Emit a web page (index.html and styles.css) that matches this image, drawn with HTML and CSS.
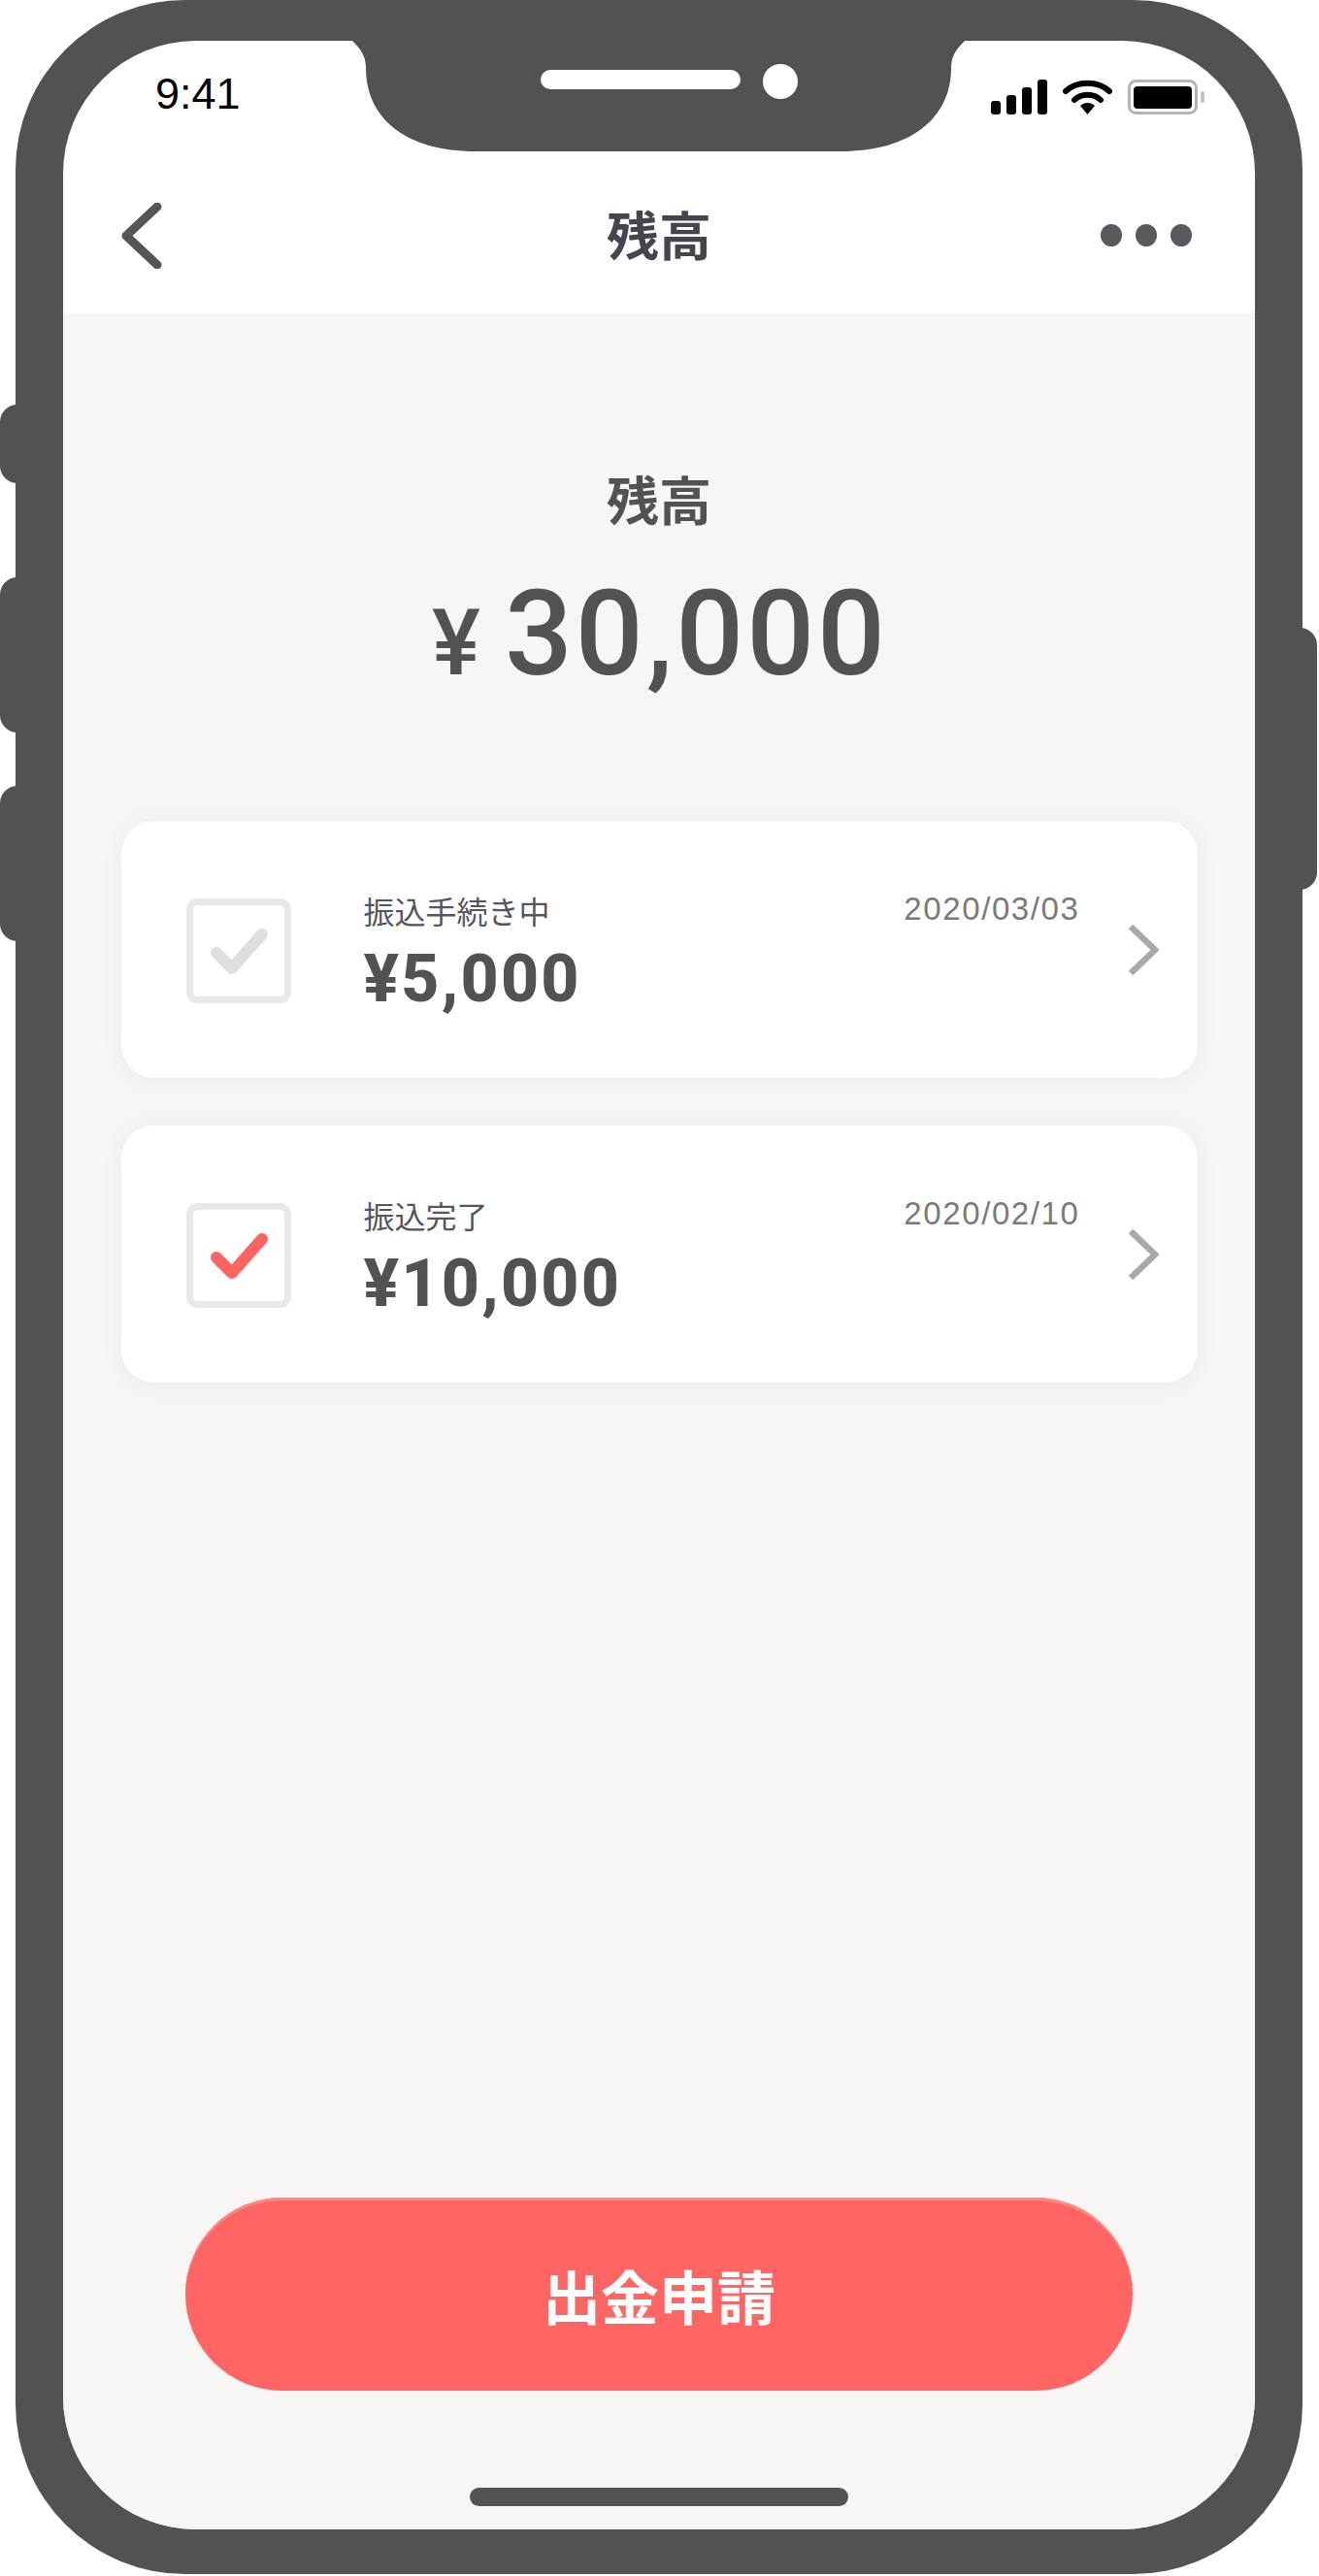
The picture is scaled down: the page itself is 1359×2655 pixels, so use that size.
FILE: index.html
```html
<!DOCTYPE html>
<html lang="ja">

<head>
    <meta charset="UTF-8">
    <title>残高</title>
    <link rel="stylesheet" href="styles.css">
</head>

<body>
    <div class="device">
        <span class="side-btn mute"></span>
        <span class="side-btn vol-up"></span>
        <span class="side-btn vol-down"></span>
        <span class="side-btn power"></span>

        <svg class="notch" width="631" height="114" viewBox="0 0 631 114">
            <path d="M0 0C8 8 14 15 14 28C14 80 55 114 127 114H503C575 114 617 80 617 28C617 15 623 8 631 0Z" fill="#525250" />
            <rect x="194" y="30" width="206" height="20" rx="10" fill="#fff" />
            <circle cx="441" cy="42" r="18" fill="#fff" />
        </svg>

        <div class="screen">
            <div class="status-bar">
                <span class="time">9:41</span>
                <div class="status-icons">
                    <svg width="58" height="36" viewBox="0 0 58 36">
                        <rect x="0" y="22" width="10" height="14" rx="3" />
                        <rect x="16" y="16" width="10" height="20" rx="3" />
                        <rect x="32" y="8" width="10" height="28" rx="3" />
                        <rect x="48" y="0" width="10" height="36" rx="3" />
                    </svg>
                    <svg width="51" height="36" viewBox="0 0 51 36">
                        <path d="M3 12C15 1 36 1 48 12" fill="none" stroke="#000" stroke-width="6" stroke-linecap="round" />
                        <path d="M12 21C19 14 32 14 39 21" fill="none" stroke="#000" stroke-width="6" stroke-linecap="round" />
                        <path d="M18 27C22 23 29 23 33 27L25.5 36Z" />
                    </svg>
                    <svg width="80" height="36" viewBox="0 0 80 36">
                        <rect x="1.5" y="1.5" width="69" height="33" rx="7" fill="none" stroke="#b5b5b5" stroke-width="3" />
                        <rect x="6" y="7" width="60" height="23" rx="4" />
                        <rect x="75" y="12" width="4" height="12" rx="2" fill="#c4c4c4" />
                    </svg>
                </div>
            </div>

            <header class="nav">
                <svg class="nav-back" width="42" height="68" viewBox="0 0 42 68">
                    <path d="M37 4L5 34L37 64" fill="none" stroke="#555" stroke-width="9" stroke-linecap="round" stroke-linejoin="round" />
                </svg>
                <h1 class="nav-title">残高</h1>
                <div class="nav-more"><i></i><i></i><i></i></div>
            </header>

            <main class="content">
                <section class="balance">
                    <p class="balance-label">残高</p>
                    <p class="balance-amount"><span class="yen">¥</span><span>30,000</span></p>
                </section>

                <section class="cards">
                    <article class="card">
                        <svg class="check" width="108" height="108" viewBox="0 0 108 108">
                            <rect x="3.5" y="3.5" width="101" height="101" rx="8" fill="none" stroke="#e8e8e8" stroke-width="7" />
                            <path d="M31 56L47 72L78 37" fill="none" stroke="#dedede" stroke-width="12" stroke-linecap="round" stroke-linejoin="round" />
                        </svg>
                        <div class="card-body">
                            <div class="card-top">
                                <span class="card-label">振込手続き中</span>
                                <span class="card-date">2020/03/03</span>
                            </div>
                            <p class="card-value">¥5,000</p>
                        </div>
                        <svg class="card-arrow" width="32" height="52" viewBox="0 0 32 52">
                            <path d="M3 2L28 26L3 50" fill="none" stroke="#a9a9a9" stroke-width="6.5" />
                        </svg>
                    </article>

                    <article class="card">
                        <svg class="check" width="108" height="108" viewBox="0 0 108 108">
                            <rect x="3.5" y="3.5" width="101" height="101" rx="8" fill="none" stroke="#e8e8e8" stroke-width="7" />
                            <path d="M31 56L47 72L78 37" fill="none" stroke="#ff6461" stroke-width="12" stroke-linecap="round" stroke-linejoin="round" />
                        </svg>
                        <div class="card-body">
                            <div class="card-top">
                                <span class="card-label">振込完了</span>
                                <span class="card-date">2020/02/10</span>
                            </div>
                            <p class="card-value">¥10,000</p>
                        </div>
                        <svg class="card-arrow" width="32" height="52" viewBox="0 0 32 52">
                            <path d="M3 2L28 26L3 50" fill="none" stroke="#a9a9a9" stroke-width="6.5" />
                        </svg>
                    </article>
                </section>

                <button class="withdraw">出金申請</button>
                <div class="home-bar"></div>
            </main>
        </div>
    </div>
</body>

</html>
```

FILE: styles.css
```css
* {
    margin: 0;
    padding: 0;
    box-sizing: border-box;
}
body {
    width: 1359px;
    height: 2655px;
    overflow: hidden;
    background: #fff;
    font-family: "Roboto", "Noto Sans CJK JP", sans-serif;
}
.device {
    position: relative;
    width: 1326px;
    height: 2653px;
    margin-left: 16px;
    padding: 42px 49px 46px;
    background: #525250;
    border-radius: 175px;
}
.side-btn {
    position: absolute;
    width: 40px;
    background: #525250;
    border-radius: 18px;
}
.mute {
    left: -16px;
    top: 417px;
    height: 81px;
}
.vol-up {
    left: -16px;
    top: 595px;
    height: 160px;
}
.vol-down {
    left: -16px;
    top: 810px;
    height: 160px;
}
.power {
    right: -15px;
    top: 647px;
    height: 270px;
}
.notch {
    position: absolute;
    left: 347px;
    top: 42px;
    z-index: 2;
}
.screen {
    display: flex;
    flex-direction: column;
    height: 100%;
    background: #fff;
    border-radius: 137px;
    overflow: hidden;
}

/* status bar */
.status-bar {
    display: flex;
    justify-content: space-between;
    height: 120px;
    padding: 40px 51px 0 95px;
}
.time {
    font-family: "Liberation Sans", sans-serif;
    font-size: 45px;
    line-height: 30px;
    color: #000;
    height: 30px;
}
.status-icons {
    display: flex;
    align-items: flex-start;
    gap: 16px;
}

/* nav */
.nav {
    display: grid;
    grid-template-columns: 1fr auto 1fr;
    align-items: center;
    height: 161px;
    padding: 0 65px;
}
.nav-back {
    margin-left: -5px;
}
.nav-title {
    margin-top: -3px;
    font-family: "Noto Sans CJK JP", sans-serif;
    font-size: 54px;
    font-weight: 700;
    line-height: 60px;
    color: #45454f;
}
.nav-more {
    display: flex;
    justify-content: flex-end;
    gap: 14px;
}
.nav-more i {
    width: 22px;
    height: 23px;
    border-radius: 50%;
    background: #5a5a5e;
}

/* content */
.content {
    flex: 1;
    display: flex;
    flex-direction: column;
    align-items: center;
    background: #f7f6f4;
    padding-top: 159px;
}
.balance {
    text-align: center;
    color: #525250;
}
.balance-label {
    font-family: "Noto Sans CJK JP", sans-serif;
    font-size: 54px;
    font-weight: 700;
    line-height: 64px;
}
.balance-amount {
    display: flex;
    align-items: baseline;
    justify-content: center;
    gap: 25px;
    margin-top: 42px;
    margin-left: 2px;
    font-size: 123px;
    font-weight: 500;
    line-height: 130px;
    letter-spacing: 3px;
}
.yen {
    font-size: 94px;
    line-height: 100px;
    letter-spacing: 0;
}

/* list */
.cards {
    display: flex;
    flex-direction: column;
    gap: 49px;
    width: 1109px;
    margin-top: 128px;
}
.card {
    display: flex;
    align-items: center;
    height: 265px;
    padding: 0 40px 0 67px;
    background: #fff;
    border-radius: 34px;
    box-shadow: 0 2px 24px rgba(0, 0, 0, .05);
}
.check {
    flex: none;
    margin: 2px 75px 0 0;
}
.card-body {
    flex: 1;
    padding-top: 8px;
}
.card-top {
    display: flex;
    justify-content: space-between;
    align-items: center;
    height: 40px;
}
.card-label {
    font-family: "Noto Sans CJK JP", sans-serif;
    font-size: 32px;
    color: #55555f;
}
.card-date {
    margin-bottom: 2px;
    font-family: "Liberation Sans", sans-serif;
    font-size: 33px;
    letter-spacing: 1.6px;
    color: #7a7a7a;
}
.card-value {
    margin-top: 13px;
    font-size: 68px;
    font-weight: 800;
    line-height: 76px;
    letter-spacing: 2.2px;
    color: #525250;
}
.card-arrow {
    flex: none;
    margin-left: 49px;
}

/* bottom */
.withdraw {
    width: 976px;
    height: 199px;
    margin-top: auto;
    border: 0;
    border-radius: 100px;
    background: #ff6663;
    box-shadow: inset 0 3px 0 #ff8785;
    font-family: "Noto Sans CJK JP", sans-serif;
    font-size: 60px;
    font-weight: 700;
    color: #fff;
}
.home-bar {
    width: 390px;
    height: 19px;
    margin: 100px 0 24px;
    border-radius: 10px;
    background: #545351;
}
```
